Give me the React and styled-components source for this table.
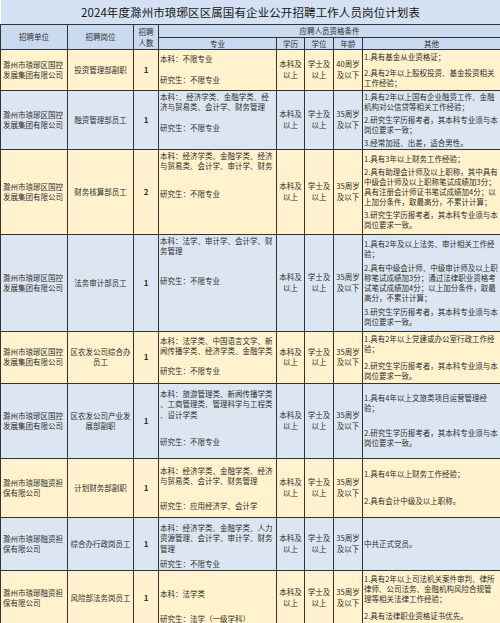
import React from 'react';
import styled, { createGlobalStyle } from 'styled-components';

const GlobalStyle = createGlobalStyle`
  html, body {
    margin: 0;
    padding: 0;
    background: #fff;
  }
  body {
    font-family: "Noto Sans CJK SC", "Noto Sans", sans-serif;
  }
`;

const Sheet = styled.table`
  width: 500px;
  border-collapse: collapse;
  table-layout: fixed;
  font-size: 7.5px;
  color: #2e2e2e;
`;

const Row = styled.tr`
  height: ${({ $h }) => $h}px;
  background: ${({ $tone }) => ($tone === 'blue' ? '#dce6f2' : $tone === 'head' ? '#c9daf0' : '#fff2cc')};
`;

const TitleCell = styled.th`
  background: #d3e1f3;
  font-size: 11.5px;
  font-weight: 400;
  color: #151515;
  border-bottom: 1px solid #333;
  padding: 0;
  letter-spacing: 0.1px;
`;

const HeadCell = styled.th`
  border: 1px solid #333;
  font-weight: 400;
  line-height: 11px;
  padding: 0;
  text-align: center;
  vertical-align: middle;
`;

const Cell = styled.td`
  border: 1px solid #333;
  padding: 0 ${({ $pad = 2 }) => $pad}px;
  line-height: 10px;
  text-align: ${({ $align = 'center' }) => $align};
  vertical-align: middle;
  font-weight: ${({ $bold }) => ($bold ? 700 : 400)};
  font-size: ${({ $bold }) => ($bold ? '8px' : 'inherit')};
  overflow: hidden;
`;

const MajorCell = styled.td`
  border: 1px solid #333;
  padding: ${({ $top }) => $top}px 0 0 1px;
  vertical-align: top;
  overflow: hidden;
`;

const OtherCell = styled.td`
  border: 1px solid #333;
  padding: 0 0 0 1px;
  vertical-align: middle;
  overflow: hidden;
`;

const Line = styled.div`
  white-space: nowrap;
  line-height: ${({ $lh = 10.5 }) => $lh}px;
`;

const Para = styled.div`
  margin-top: ${({ $gap }) => $gap}px;
  &:first-child {
    margin-top: 0;
  }
`;

const Grad = styled.div`
  margin-top: ${({ $gap }) => $gap}px;
  white-space: nowrap;
  line-height: 10.5px;
`;

const GUOKONG = '滁州市琅琊区国控发展集团有限公司';
const RONGZI = '滁州市琅琊融资担保有限公司';
const ANY = '研究生：不限专业';

const rows = [
  {
    h: 41, tone: 'yellow', unit: GUOKONG, post: '投资管理部副职', n: 1, age: ['40周岁', '及以下'],
    major: ['本科：不限专业'], grad: ANY, top: 4, gap: 11, pgap: 6,
    other: [['1.具有基金从业资格证；'], ['2.具有2年以上股权投资、基金投资相关', '工作经验；']],
  },
  {
    h: 59, tone: 'blue', unit: GUOKONG, post: '融资管理部员工', n: 1,
    major: ['本科：、经济学类、金融学类、经', '济与贸易类、会计学、财务管理'], grad: ANY, top: 1, gap: 10, pgap: 3,
    other: [
      ['1.具有2年以上国有企业融资工作、金融', '机构对公信贷等相关工作经验；'],
      ['2.研究生学历报考者，其本科专业须与本', '岗位要求一致；'],
      ['3.经常加班、出差，适合男性。'],
    ],
  },
  {
    h: 85, tone: 'yellow', unit: GUOKONG, post: '财务核算部员工', n: 2,
    major: ['本科：经济学类、金融学类、经济', '与贸易类、会计学、审计学、财务'], grad: ANY, top: 1, gap: 17, pgap: 3,
    other: [
      ['1.具有3年以上财务工作经验；'],
      ['2.具有助理会计师及以上职称，其中具有', '中级会计师及以上职称笔试成绩加3分；', '具有注册会计师证书笔试成绩加4分；以', '上加分条件，取最高分，不累计计算；'],
      ['3.研究生学历报考者，其本科专业须与本', '岗位要求一致。'],
    ],
  },
  {
    h: 97, tone: 'blue', unit: GUOKONG, post: '法务审计部员工', n: 1,
    major: ['本科：法学、审计学、会计学、财', '务管理'], grad: ANY, top: 1, gap: 19, pgap: 4,
    other: [
      ['1.具有2年及以上法务、审计相关工作经', '验；'],
      ['2.具有中级会计师、中级审计师及以上职', '称笔试成绩加3分；通过法律职业资格考', '试笔试成绩加4分；以上加分条件，取最', '高分，不累计计算；'],
      ['3.研究生学历报考者，其本科专业须与本', '岗位要求一致。'],
    ],
  },
  {
    h: 52, tone: 'yellow', unit: GUOKONG, post: '区农发公司综合办员工', n: 1,
    major: ['本科：法学类、中国语言文学、新', '闻传播学类、经济学类、金融学类'], grad: ANY, top: 4, gap: 9, pgap: 7,
    other: [
      ['1.具有2年以上党建或办公室行政工作经', '验；'],
      ['2.研究生学历报考者，其本科专业须与本', '岗位要求一致。'],
    ],
  },
  {
    h: 75, tone: 'blue', unit: GUOKONG, post: '区农发公司产业发展部副职', n: 1,
    major: ['本科：旅游管理类、新闻传播学类', '、工商管理类、管理科学与工程类', '、设计学类'], grad: ANY, top: 5, gap: 17, pgap: 15,
    other: [
      ['1.具有4年以上文旅类项目运营管理经', '验；'],
      ['2.研究生学历报考者，其本科专业须与本', '岗位要求一致。'],
    ],
  },
  {
    h: 59, tone: 'yellow', unit: RONGZI, post: '计划财务部副职', n: 1,
    major: ['本科：经济学类、金融学类、经济', '与贸易类、会计学、财务管理'], grad: '研究生：应用经济学、会计学', top: 7, gap: 14, pgap: 17,
    other: [['1.具有4年以上财务工作经验；'], ['2.具有会计中级及以上职称。']],
  },
  {
    h: 51, tone: 'blue', unit: RONGZI, post: '综合办行政岗员工', n: 1,
    major: ['本科：经济学类、金融学类、人力', '资源管理、会计学、审计学、财务', '管理'], grad: ANY, top: 5, gap: 5, pgap: 0,
    other: [['中共正式党员。']],
  },
  {
    h: 55, tone: 'yellow', unit: RONGZI, post: '风险部法务岗员工', n: 1,
    major: ['本科：法学类'], grad: '研究生：法学（一级学科）', top: 18, gap: 15, pgap: 7,
    other: [
      ['1.具有2年以上司法机关案件审判、律所', '律师、公司法务、金融机构风险合规管', '理等相关法律工作经验；'],
      ['2.具有法律职业资格证书优先。'],
    ],
  },
];

const Lines = ({ items }) => items.map((t) => <Line key={t}>{t}</Line>);

const JobRow = ({ job }) => (
  <Row $h={job.h} $tone={job.tone}>
    <Cell $align="left">{job.unit}</Cell>
    <Cell>{job.post}</Cell>
    <Cell $bold>{job.n}</Cell>
    <MajorCell $top={job.top}>
      <Lines items={job.major} />
      <Grad $gap={job.gap}>{job.grad}</Grad>
    </MajorCell>
    <Cell $pad={0}><Lines items={['本科及', '以上']} /></Cell>
    <Cell $pad={0}><Lines items={['学士及', '以上']} /></Cell>
    <Cell $pad={0}><Lines items={job.age || ['35周岁', '及以下']} /></Cell>
    <OtherCell>
      {job.other.map((p) => (
        <Para key={p[0]} $gap={job.pgap}>
          {p.map((t) => <Line key={t} $lh={10}>{t}</Line>)}
        </Para>
      ))}
    </OtherCell>
  </Row>
);

const App = () => (
  <>
    <GlobalStyle />
    <Sheet>
      <colgroup>
        <col style={{ width: 67 }} />
        <col style={{ width: 66 }} />
        <col style={{ width: 25 }} />
        <col style={{ width: 118 }} />
        <col style={{ width: 28 }} />
        <col style={{ width: 29 }} />
        <col style={{ width: 29 }} />
        <col style={{ width: 138 }} />
      </colgroup>
      <thead>
        <Row $h={24} $tone="head">
          <TitleCell colSpan={8}>2024年度滁州市琅琊区区属国有企业公开招聘工作人员岗位计划表</TitleCell>
        </Row>
        <Row $h={13} $tone="head">
          <HeadCell rowSpan={2}>招聘单位</HeadCell>
          <HeadCell rowSpan={2}>招聘岗位</HeadCell>
          <HeadCell rowSpan={2}>招聘<br />人数</HeadCell>
          <HeadCell colSpan={5}>应聘人员资格条件</HeadCell>
        </Row>
        <Row $h={12} $tone="head">
          <HeadCell>专业</HeadCell>
          <HeadCell>学历</HeadCell>
          <HeadCell>学位</HeadCell>
          <HeadCell>年龄</HeadCell>
          <HeadCell>其他</HeadCell>
        </Row>
      </thead>
      <tbody>
        {rows.map((job) => <JobRow key={job.post} job={job} />)}
      </tbody>
    </Sheet>
  </>
);

export default App;
